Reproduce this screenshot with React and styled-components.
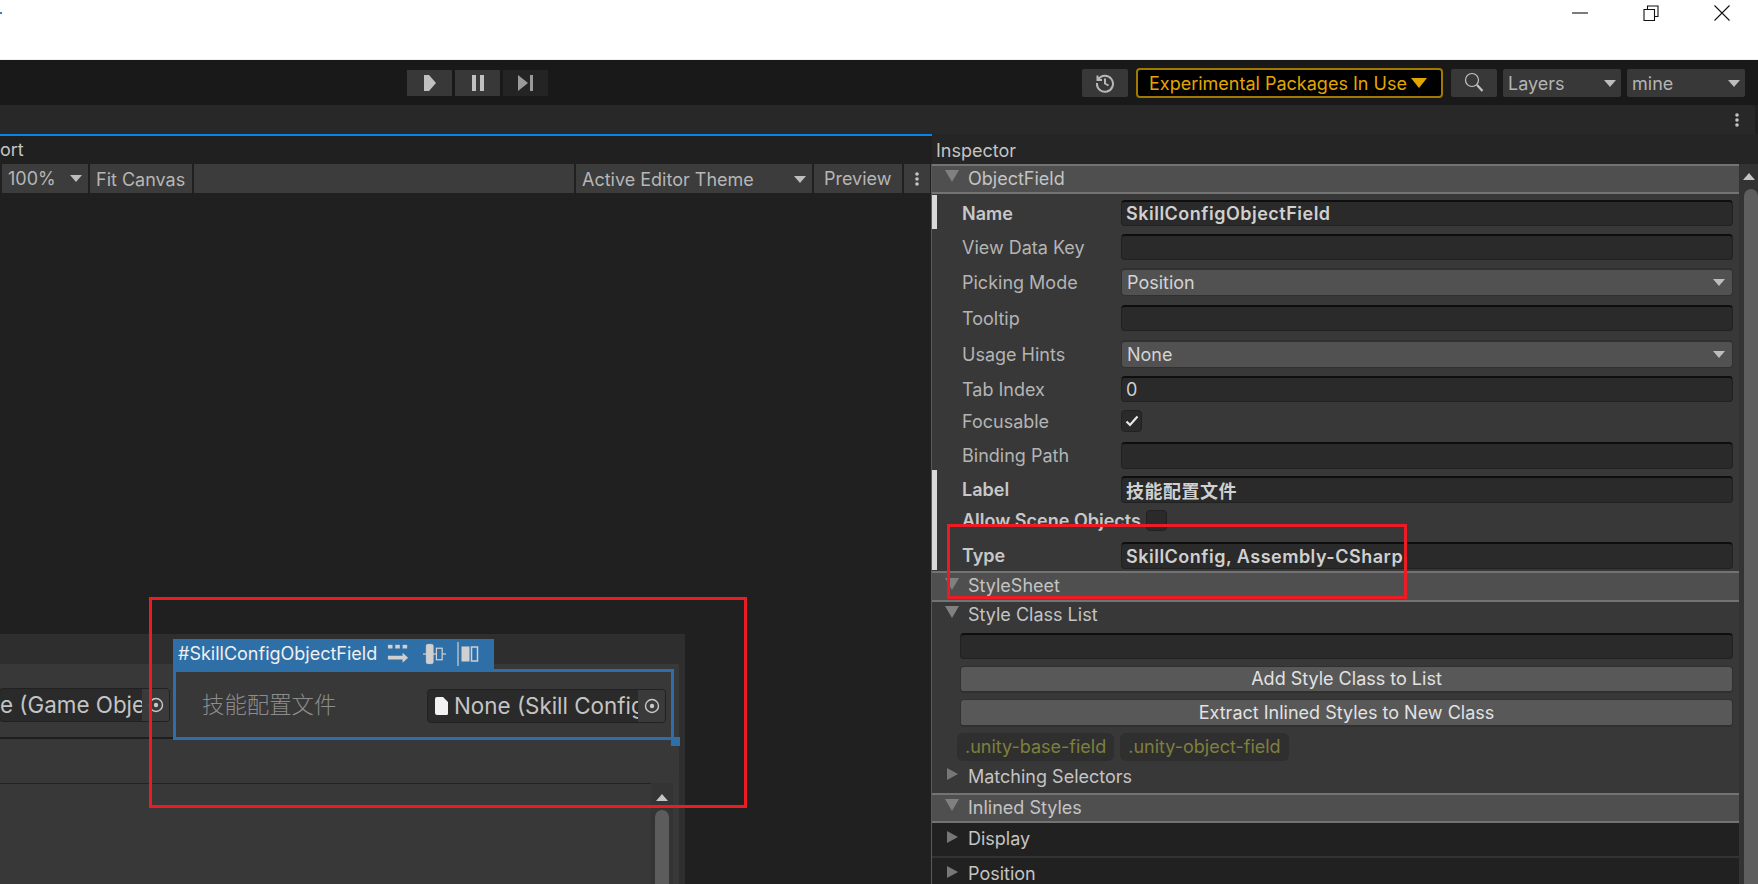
import React from 'react';
import styled, { createGlobalStyle } from 'styled-components';

const Global = createGlobalStyle`
  html, body { margin: 0; padding: 0; height: 884px; overflow: hidden; background: #202020; }
  * { box-sizing: border-box; }
  body { font-family: Inter, "Noto Sans CJK SC", "Liberation Sans", sans-serif; font-size: 18px; color: #c4c4c4; }
`;

const Page = styled.div`
  position: relative;
  width: 1758px;
  height: 884px;
  overflow: hidden;
  display: flex;
  flex-direction: column;
`;

// window chrome
const TitleBar = styled.div`
  height: 60px;
  background: #fff;
  border-bottom: 1px solid #efefef;
  display: flex;
  justify-content: flex-end;
  padding: 5px 28px 0 0;
  gap: 55px;
  flex-shrink: 0;
`;

const WinIcon = styled.svg`
  width: 16px;
  height: 16px;
  stroke: #111;
  fill: none;
  stroke-width: 1.1;
`;

const AccentDot = styled.span`
  position: absolute;
  left: 0;
  top: 12px;
  width: 2px;
  height: 2px;
  background: #2a7fd0;
`;

const MainToolbar = styled.div`
  height: 45px;
  background: #191919;
  display: flex;
  align-items: center;
  padding: 0 13px 0 407px;
  flex-shrink: 0;
`;

const PlayGroup = styled.div`
  display: flex;
  gap: 3px;
  margin-right: auto;
`;

const PlayButton = styled.div`
  width: 45px;
  height: 26px;
  background: ${p => (p.$dim ? '#242424' : '#383838')};
  display: flex;
  align-items: center;
  justify-content: center;
`;

const ToolButton = styled.div`
  width: 46px;
  height: 28px;
  background: #383838;
  border-radius: 2px;
  display: flex;
  align-items: center;
  justify-content: center;
  margin-right: ${p => p.$mr || 0}px;
`;

const PackagesButton = styled.div`
  width: 307px;
  height: 30px;
  background: #000;
  border: 2px solid #a07a00;
  border-radius: 4px;
  color: #e3a600;
  display: flex;
  align-items: center;
  gap: 4px;
  padding: 1px 0 0 11px;
  margin-right: 8px;
`;

const ToolDropdown = styled.div`
  width: 118px;
  height: 28px;
  background: #383838;
  border-radius: 2px;
  display: flex;
  align-items: center;
  justify-content: space-between;
  padding: 1px 5px 0;
  color: #b4b4b4;
  margin-left: 6px;
`;

const Arrow = styled.span`
  width: 0;
  height: 0;
  flex-shrink: 0;
  border-left: ${p => p.$w || 6}px solid transparent;
  border-right: ${p => p.$w || 6}px solid transparent;
  border-top: ${p => p.$h || 7}px solid ${p => p.$c || '#bdbdbd'};
`;

const SecondBar = styled.div`
  height: 29px;
  background: #282828;
  margin-right: 3px;
  border-top-right-radius: 4px;
  display: flex;
  align-items: center;
  justify-content: flex-end;
  padding-right: 16px;
  flex-shrink: 0;
`;

const Dots = styled.svg`
  width: 4px;
  height: 14px;
  fill: ${p => p.$c || '#c4c4c4'};
`;

const Workspace = styled.div`
  flex: 1;
  display: flex;
  min-height: 0;
`;

// left side
const Builder = styled.section`
  width: 932px;
  flex-shrink: 0;
  background: #202020;
  border-top: 2px solid #0a84e6;
  display: flex;
  flex-direction: column;
`;

const TabRow = styled.div`
  height: 28px;
  line-height: 27px;
  flex-shrink: 0;
`;

const ViewportBar = styled.div`
  height: 29px;
  display: flex;
  gap: 2px;
  padding: 0 2px;
  flex-shrink: 0;
`;

const BarItem = styled.div`
  width: ${p => p.$w}px;
  background: #3c3c3c;
  color: #b6b6b6;
  display: flex;
  align-items: center;
  justify-content: ${p => p.$justify || 'flex-start'};
  padding: ${p => p.$pt || 0}px 6px 0 ${p => p.$pl || 6}px;
`;

const Viewport = styled.div`
  margin-top: 441px;
  width: 685px;
  flex: 1;
  background: #2e2e2e;
  padding: 30px 6px 0 0;
`;

const CanvasBody = styled.div`
  height: 100%;
  background: #383838;
  display: flex;
  flex-direction: column;
`;

const ElementRow = styled.div`
  height: 75px;
  display: flex;
  flex-shrink: 0;
`;

const SiblingCell = styled.div`
  width: 173px;
  border-bottom: 2px solid #1e1e1e;
  padding-top: 24px;
  display: flex;
  justify-content: flex-end;
  align-items: flex-start;
  padding-right: 3px;
`;

const ObjectInput = styled.div`
  width: ${p => p.$w}px;
  height: 34px;
  background: #2a2a2a;
  border: 1px solid #212121;
  border-radius: 4px;
  display: flex;
  align-items: center;
  overflow: hidden;
  font-size: 22.4px;
  flex-shrink: 0;
`;

const ObjectText = styled.span`
  flex: 1;
  white-space: nowrap;
  overflow: hidden;
  color: #c4c4c4;
  min-width: 0;
  margin-top: -1px;
`;

const ObjectSelect = styled.span`
  width: 27px;
  height: 100%;
  background: #3a3a3a;
  display: flex;
  align-items: center;
  justify-content: center;
  flex-shrink: 0;
`;

const SelectedBox = styled.div`
  position: relative;
  width: 501px;
  height: 71px;
  margin-top: 5px;
  border: 3px solid #2e6fa8;
  display: flex;
  align-items: center;
  justify-content: space-between;
  padding: 2px 5px 0 26px;
`;

const SelectedTag = styled.div`
  position: absolute;
  left: -3px;
  top: -33px;
  width: 321px;
  height: 33px;
  background: #2e6fa8;
  color: #f0f0f0;
  font-size: 18px;
  display: flex;
  align-items: center;
  padding: 0 0 4px 5px;
  gap: 11px;
`;

const ResizeHandle = styled.span`
  position: absolute;
  right: -9px;
  bottom: -9px;
  width: 9px;
  height: 9px;
  background: #2e6fa8;
`;

const PreviewLabel = styled.span`
  font-size: 22.4px;
  color: #8c8c8c;
  font-family: "Noto Sans CJK SC", sans-serif;
  font-weight: 300;
  margin-top: -5px;
`;

const ListPane = styled.div`
  margin-top: 44px;
  flex: 1;
  display: flex;
`;

const ListBody = styled.div`
  width: 651px;
  border-top: 1px solid #232323;
`;

const PaneScroll = styled.div`
  width: 22px;
  background: #343434;
  display: flex;
  flex-direction: column;
  align-items: center;
  padding-top: 11px;
  gap: 9px;
  flex: 1;
  margin-right: 6px;
`;

const ScrollThumb = styled.div`
  width: 14px;
  flex: 1;
  background: #5c5c5c;
  border-radius: 7px 7px 0 0;
`;

const UpArrow = styled(Arrow)`
  border-top: 0;
  border-bottom: ${p => p.$h || 7}px solid #c4c4c4;
`;

// right side
const Inspector = styled.section`
  flex: 1;
  display: flex;
  flex-direction: column;
  background: #252525;
  min-width: 0;
`;

const InspectorTab = styled.div`
  height: 30px;
  padding-left: 4px;
  line-height: 33px;
  flex-shrink: 0;
`;

const InspectorBody = styled.div`
  flex: 1;
  display: flex;
  min-height: 0;
`;

const Fields = styled.div`
  width: 807px;
  flex-shrink: 0;
  background: #383838;
  position: relative;
`;

const Gutter = styled.span`
  position: absolute;
  left: -1px;
  top: 0;
  bottom: 0;
  width: 1px;
  background: #5a5a5a;
`;

const Foldout = styled.div`
  height: ${p => p.$h}px;
  margin-top: ${p => p.$mt || 0}px;
  display: flex;
  align-items: center;
  padding: 0 0 2px 13px;
  gap: 9px;
  background: ${p => (p.$kind === 'header' ? '#4f4f4f' : p.$kind === 'dark' ? '#212121' : 'transparent')};
  border-top: ${p => (p.$kind === 'header' ? '2px solid #737373' : 'none')};
  border-bottom: ${p => (p.$kind === 'header' ? '2px solid #737373' : p.$kind === 'dark' ? '2px solid #333' : 'none')};
`;

const Caret = styled.span`
  width: 0;
  height: 0;
  flex-shrink: 0;
  margin-top: -4px;
  ${p =>
    p.$open
      ? `border-left: 7px solid transparent; border-right: 7px solid transparent; border-top: 12px solid #808080;`
      : `margin-left: 2px; margin-right: 1px; border-top: 6.5px solid transparent; border-bottom: 6.5px solid transparent; border-left: 11px solid #777;`}
`;

const ModifiedGroup = styled.div`
  margin-top: ${p => p.$mt || 0}px;
  padding: ${p => p.$pt}px 0 ${p => p.$pb}px;
  box-shadow: inset 5px 0 0 #d9d9d9;
`;

const Row = styled.div`
  height: ${p => p.$h || 26}px;
  margin-top: ${p => p.$mt || 0}px;
  display: flex;
  align-items: center;
  padding: 0 6px 0 30px;
`;

const Label = styled.label`
  width: ${p => (p.$auto ? 'auto' : '159px')};
  flex-shrink: 0;
  color: ${p => (p.$strong ? '#c8c8c8' : '#b4b4b4')};
  font-weight: ${p => (p.$strong ? 600 : 400)};
  white-space: nowrap;
`;

const TextInput = styled.div`
  flex: 1;
  height: 100%;
  background: #2a2a2a;
  border: 1px solid #212121;
  border-top: 2px solid #0e0e0e;
  border-radius: 4px;
  padding-left: 4px;
  display: flex;
  align-items: center;
  color: #d0d0d0;
  font-weight: ${p => (p.$strong ? 600 : 400)};
  letter-spacing: ${p => (p.$strong ? '0.5px' : 0)};
  white-space: nowrap;
`;

const Select = styled.div`
  flex: 1;
  height: 100%;
  background: #515151;
  border: 1px solid #303030;
  border-top-width: 2px;
  border-radius: 4px;
  padding: 0 7px 0 5px;
  display: flex;
  align-items: center;
  justify-content: space-between;
  color: #d4d4d4;
`;

const Checkbox = styled.span`
  width: 21px;
  height: ${p => p.$h || 22}px;
  background: #2a2a2a;
  border: 1px solid #212121;
  border-radius: 4px;
  margin-left: ${p => p.$ml || 0}px;
  display: flex;
  align-items: center;
  justify-content: center;
  flex-shrink: 0;
`;

const ListRow = styled.div`
  height: ${p => p.$h}px;
  margin: ${p => p.$mt}px 6px 0 28px;
  display: flex;
`;

const WideButton = styled.div`
  flex: 1;
  background: #585858;
  border: 1px solid #303030;
  border-bottom-width: 2px;
  border-radius: 4px;
  color: #e2e2e2;
  display: flex;
  align-items: center;
  justify-content: center;
  padding-bottom: 1px;
`;

const Pills = styled.div`
  margin: 6px 0 0 25px;
  height: 28px;
  display: flex;
  gap: 6px;
`;

const Pill = styled.span`
  background: #2f2f2f;
  border-radius: 6px;
  color: #7f7f3d;
  padding: 0 8px 2px;
  display: flex;
  align-items: center;
`;

const Scrollbar = styled.div`
  width: 19px;
  background: #333;
  display: flex;
  flex-direction: column;
  align-items: center;
  padding-top: 9px;
  gap: 9px;
`;

const ScrollThumbWide = styled.div`
  width: 14px;
  flex: 1;
  margin-left: 4px;
  background: #5e5e5e;
  border-radius: 7px 7px 0 0;
`;

const Callout = styled.div`
  position: absolute;
  left: ${p => p.$x}px;
  top: ${p => p.$y}px;
  width: ${p => p.$w}px;
  height: ${p => p.$h}px;
  border: 3px solid #ed1c24;
  pointer-events: none;
`;

const Target = () => (
  <svg width="16" height="16" viewBox="0 0 16 16" fill="none">
    <circle cx="8" cy="8" r="6.500" stroke="#c8c8c8" strokeWidth="1.400" />
    <circle cx="8" cy="8" r="2.200" fill="#c8c8c8" />
  </svg>
);

const TagIcons = () => (
  <>
    <svg width="22" height="22" viewBox="0 0 24 22" fill="#d0d0d0" style={{ marginLeft: -1 }}>
      <rect x="1" y="1" width="5" height="4" />
      <rect x="9" y="1" width="5" height="4" />
      <rect x="17" y="1" width="5" height="4" />
      <path d="M1 13h16V9.500l6 5.500-6 5.500V17H1z" />
    </svg>
    <svg width="23" height="24" viewBox="0 0 24 24" fill="none" stroke="#d0d0d0" style={{ marginLeft: 3 }}>
      <path d="M0 12h24" strokeWidth="1.300" />
      <rect x="3.500" y="2" width="7" height="20" rx="1.500" fill="#d0d0d0" />
      <rect x="14" y="6" width="6" height="12" fill="#2e6fa8" strokeWidth="1.300" />
    </svg>
    <svg width="22" height="26" viewBox="0 0 22 26" fill="none" stroke="#d0d0d0">
      <path d="M1 1v24" strokeWidth="1.200" />
      <rect x="5" y="6" width="7" height="14" fill="#d0d0d0" />
      <rect x="14.500" y="6" width="6" height="14" strokeWidth="1.500" />
    </svg>
  </>
);

const FileGlyph = () => (
  <svg width="13" height="18" viewBox="0 0 13 18" fill="#f2f2f2" style={{ margin: '0 6px 0 7px', flexShrink: 0 }}>
    <path d="M2 0h6l5 5v11.500a1.500 1.500 0 0 1-1.500 1.500h-9.500A2 2 0 0 1 0 16V2a2 2 0 0 1 2-2z" />
  </svg>
);

const Check = () => (
  <svg width="14" height="12" viewBox="0 0 14 12" fill="none" stroke="#e8e8e8" strokeWidth="2.200">
    <path d="M1.500 6.500 5 10l7.500-8.500" />
  </svg>
);

export default function App() {
  return (
    <Page>
      <Global />
      <AccentDot />
      <TitleBar>
        <WinIcon viewBox="0 0 16 16"><path d="M0 8h16" /></WinIcon>
        <WinIcon viewBox="0 0 16 16"><path d="M1 4.500h10.500V15.500H1zM4.500 4.500V1H15v10.500h-3.500" /></WinIcon>
        <WinIcon viewBox="0 0 16 16"><path d="M.5.500l15 15M15.500.500l-15 15" /></WinIcon>
      </TitleBar>
      <MainToolbar>
        <PlayGroup>
          <PlayButton>
            <svg width="14" height="16" viewBox="0 0 14 16" fill="#c0c0c0"><path d="M1 0h5l7 8-7 8H1z" /></svg>
          </PlayButton>
          <PlayButton>
            <svg width="14" height="16" viewBox="0 0 14 16" fill="#c0c0c0"><path d="M1 0h4v16H1zM9 0h4v16H9z" /></svg>
          </PlayButton>
          <PlayButton $dim>
            <svg width="16" height="16" viewBox="0 0 16 16" fill="#9a9a9a"><path d="M0 0l10 8-10 8zM12 0h3v16h-3z" /></svg>
          </PlayButton>
        </PlayGroup>
        <ToolButton $mr={8}>
          <svg width="20" height="20" viewBox="0 0 20 20" fill="none" stroke="#b8b8b8" strokeWidth="2">
            <path d="M3.200 6.500A8 8 0 1 1 2 10M2.500 2.500v4.500H7M10 5.500V10.500l3.500 2" />
          </svg>
        </ToolButton>
        <PackagesButton>
          Experimental Packages In Use
          <Arrow $w={8} $h={10} $c="#e3a600" />
        </PackagesButton>
        <ToolButton>
          <svg width="20" height="22" viewBox="0 0 20 22" fill="none" stroke="#c4c4c4" strokeWidth="1.200">
            <circle cx="8" cy="8" r="6.500" />
            <path d="M13 13l5.500 6" strokeWidth="2.200" />
          </svg>
        </ToolButton>
        <ToolDropdown>Layers<Arrow /></ToolDropdown>
        <ToolDropdown>mine<Arrow /></ToolDropdown>
      </MainToolbar>
      <SecondBar>
        <Dots viewBox="0 0 4 14"><circle cx="2" cy="2" r="1.800" /><circle cx="2" cy="7" r="1.800" /><circle cx="2" cy="12" r="1.800" /></Dots>
      </SecondBar>
      <Workspace>
        <Builder>
          <TabRow>ort</TabRow>
          <ViewportBar>
            <BarItem $w={86}>100%<Arrow style={{ marginLeft: 'auto' }} /></BarItem>
            <BarItem $w={102} $pt={2}>Fit Canvas</BarItem>
            <BarItem $w={380} />
            <BarItem $w={236} $pt={2}>Active Editor Theme<Arrow style={{ marginLeft: 'auto' }} /></BarItem>
            <BarItem $w={88} $pl={10}>Preview</BarItem>
            <BarItem $w={26} $justify="center">
              <Dots viewBox="0 0 4 14"><circle cx="2" cy="2" r="1.800" /><circle cx="2" cy="7" r="1.800" /><circle cx="2" cy="12" r="1.800" /></Dots>
            </BarItem>
          </ViewportBar>
          <Viewport>
            <CanvasBody>
              <ElementRow>
                <SiblingCell>
                  <ObjectInput $w={171}>
                    <ObjectText>e (Game Obje</ObjectText>
                    <ObjectSelect><Target /></ObjectSelect>
                  </ObjectInput>
                </SiblingCell>
                <SelectedBox>
                  <SelectedTag>#SkillConfigObjectField <TagIcons /></SelectedTag>
                  <PreviewLabel>技能配置文件</PreviewLabel>
                  <ObjectInput $w={239}>
                    <FileGlyph />
                    <ObjectText>None (Skill Config</ObjectText>
                    <ObjectSelect><Target /></ObjectSelect>
                  </ObjectInput>
                  <ResizeHandle />
                </SelectedBox>
              </ElementRow>
              <ListPane>
                <ListBody />
                <PaneScroll>
                  <UpArrow />
                  <ScrollThumb />
                </PaneScroll>
              </ListPane>
            </CanvasBody>
          </Viewport>
        </Builder>
        <Inspector>
          <InspectorTab>Inspector</InspectorTab>
          <InspectorBody>
            <Fields>
              <Gutter />
              <Foldout $kind="header" $h={30}><Caret $open />ObjectField</Foldout>
              <ModifiedGroup $mt={1} $pt={5} $pb={3}>
                <Row><Label $strong>Name</Label><TextInput $strong>SkillConfigObjectField</TextInput></Row>
              </ModifiedGroup>
              <Row $mt={5}><Label>View Data Key</Label><TextInput /></Row>
              <Row $mt={8} $h={28}><Label>Picking Mode</Label><Select>Position<Arrow /></Select></Row>
              <Row $mt={9}><Label>Tooltip</Label><TextInput /></Row>
              <Row $mt={9} $h={28}><Label>Usage Hints</Label><Select>None<Arrow /></Select></Row>
              <Row $mt={8}><Label>Tab Index</Label><TextInput>0</TextInput></Row>
              <Row $mt={8} $h={22}><Label>Focusable</Label><Checkbox><Check /></Checkbox></Row>
              <Row $mt={10} $h={27}><Label>Binding Path</Label><TextInput /></Row>
              <ModifiedGroup $mt={1} $pt={6} $pb={1}>
                <Row $h={27}><Label $strong>Label</Label><TextInput $strong>技能配置文件</TextInput></Row>
                <Row $mt={7} $h={21}><Label $auto $strong>Allow Scene Objects</Label><Checkbox $h={21} $ml={5} /></Row>
                <Row $mt={11} $h={27}><Label $strong>Type</Label><TextInput $strong>SkillConfig, Assembly-CSharp</TextInput></Row>
              </ModifiedGroup>
              <Foldout $kind="header" $h={31} $mt={1}><Caret $open />StyleSheet</Foldout>
              <Foldout $h={26}><Caret $open />Style Class List</Foldout>
              <ListRow $h={26} $mt={5}><TextInput /></ListRow>
              <ListRow $h={27} $mt={7}><WideButton>Add Style Class to List</WideButton></ListRow>
              <ListRow $h={28} $mt={6}><WideButton>Extract Inlined Styles to New Class</WideButton></ListRow>
              <Pills>
                <Pill>.unity-base-field</Pill>
                <Pill>.unity-object-field</Pill>
              </Pills>
              <Foldout $h={32}><Caret />Matching Selectors</Foldout>
              <Foldout $kind="header" $h={30}><Caret $open />Inlined Styles</Foldout>
              <Foldout $kind="dark" $h={35}><Caret />Display</Foldout>
              <Foldout $kind="dark" $h={35}><Caret />Position</Foldout>
            </Fields>
            <Scrollbar>
              <UpArrow />
              <ScrollThumbWide />
            </Scrollbar>
          </InspectorBody>
        </Inspector>
      </Workspace>
      <Callout $x={149} $y={597} $w={598} $h={211} />
      <Callout $x={947} $y={524} $w={460} $h={75} />
    </Page>
  );
}
